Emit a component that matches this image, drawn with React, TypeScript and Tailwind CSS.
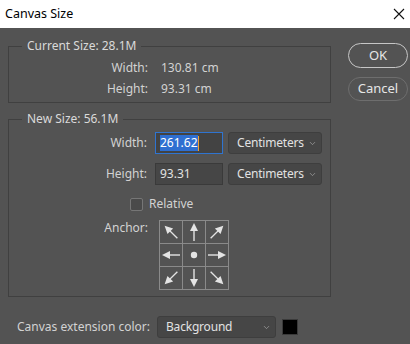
import { ChevronDown } from 'lucide-react';

const font = { fontFamily: '"Noto Sans", "Open Sans", sans-serif' };

function Arrow({ angle }: { angle: number }) {
  return (
    <svg width="22" height="22" viewBox="0 0 22 22" className="block">
      <g transform={`rotate(${angle} 11 11)`} fill="#e4e4e4" stroke="#e4e4e4">
        <line x1="11" y1="20" x2="11" y2="8" strokeWidth="1.4" />
        <polygon points="11,2 7,10 15,10" stroke="none" />
      </g>
    </svg>
  );
}

function Dot() {
  return (
    <svg width="22" height="22" viewBox="0 0 22 22" className="block">
      <circle cx="11" cy="11" r="3.2" fill="#e4e4e4" />
    </svg>
  );
}

function Select({ label, w }: { label: string; w: string }) {
  return (
    <div
      className={`flex h-[22px] ${w} items-center justify-between rounded-[3px] border border-[#3e3e3e] bg-[#464646] pl-[8px] pr-[4px] text-[12px] text-[#e2e2e2]`}
    >
      <span className="whitespace-nowrap tracking-[-0.2px]">{label}</span>
      <ChevronDown size={9} strokeWidth={1.6} className="shrink-0 text-[#b4b4b4]" />
    </div>
  );
}

export default function App() {
  const cells = [-45, 0, 45, -90, null, 90, -135, 180, 135];

  return (
    <div style={font} className="h-[344px] w-[410px] overflow-hidden bg-[#535353] text-[12px] text-[#d2d2d2]">
      {/* Title bar */}
      <div className="flex h-[28px] items-center justify-between bg-white pl-[5px] pr-[5px] text-[12.5px] text-black">
        <span>Canvas Size</span>
        <svg width="12" height="12" viewBox="0 0 12 12">
          <path d="M1 1 L11 11 M11 1 L1 11" stroke="#111" strokeWidth="1.1" />
        </svg>
      </div>

      <div className="flex pl-[8px] pt-[9px]">
        <div className="w-[323px]">
          {/* Current size */}
          <fieldset className="h-[66px] border border-[#404040] pb-0">
            <legend className="ml-[13px] px-[5px] leading-[18px] text-[#dadada]">Current Size: 28.1M</legend>
            <div className="mt-[4px] grid grid-cols-[139px_1fr] gap-x-[13px] gap-y-[3px] leading-[18px]">
              <span className="text-right">Width:</span>
              <span>130.81 cm</span>
              <span className="text-right">Height:</span>
              <span>93.31 cm</span>
            </div>
          </fieldset>

          {/* New size */}
          <fieldset className="mt-[7px] h-[187px] border border-[#404040]">
            <legend className="ml-[13px] px-[5px] leading-[18px] text-[#dadada]">New Size: 56.1M</legend>
            <div className="mt-[4px] flex items-center">
              <span className="w-[138px] text-right">Width:</span>
              <div className="ml-[8px] flex h-[22px] w-[68px] items-center border border-[#2f74d0] bg-[#434343] pl-[4px]">
                <span className="bg-[#2f6fd1] leading-[16px] text-white">261.62</span>
                <span className="h-[15px] w-px bg-[#f0a030]" />
              </div>
              <div className="ml-[5px]">
                <Select label="Centimeters" w="w-[94px]" />
              </div>
            </div>
            <div className="mt-[9px] flex items-center">
              <span className="w-[138px] text-right">Height:</span>
              <div className="ml-[8px] flex h-[22px] w-[68px] items-center border border-[#3a3a3a] bg-[#464646] pl-[4px] text-[#e2e2e2]">
                93.31
              </div>
              <div className="ml-[5px]">
                <Select label="Centimeters" w="w-[94px]" />
              </div>
            </div>
            <div className="mt-[10px] flex items-center pl-[121px]">
              <span className="h-[13px] w-[13px] rounded-[2px] border border-[#767676] bg-[#4a4a4a]" />
              <span className="ml-[6px]">Relative</span>
            </div>
            <div className="mt-[7px] flex items-start">
              <span className="mt-[-1px] w-[139px] text-right">Anchor:</span>
              <div className="ml-[11px] grid grid-cols-[repeat(3,23px)] border-l border-t border-[#8a8a8a]">
                {cells.map((a, i) => (
                  <div key={i} className="flex h-[23px] w-[23px] items-center justify-center border-b border-r border-[#8a8a8a]">
                    {a === null ? <Dot /> : <Arrow angle={a} />}
                  </div>
                ))}
              </div>
            </div>
          </fieldset>
        </div>

        {/* Buttons */}
        <div className="ml-[17px] flex flex-col pt-[6px]">
          <div className="flex h-[25px] w-[60px] items-center justify-center rounded-full border border-[#c6c6c6] text-[13px] text-[#e6e6e6]">
            OK
          </div>
          <div className="mt-[9px] flex h-[24px] w-[60px] items-center justify-center rounded-full border border-[#6e6e6e] text-[13px] text-[#e6e6e6]">
            Cancel
          </div>
        </div>
      </div>

      {/* Canvas extension color */}
      <div className="mt-[19px] flex items-center pl-[17px]">
        <span>Canvas extension color:</span>
        <div className="ml-[7px]">
          <Select label="Background" w="w-[119px]" />
        </div>
        <span className="ml-[6px] h-[16px] w-[16px] border border-[#3a3a3a] bg-black" />
      </div>
    </div>
  );
}
